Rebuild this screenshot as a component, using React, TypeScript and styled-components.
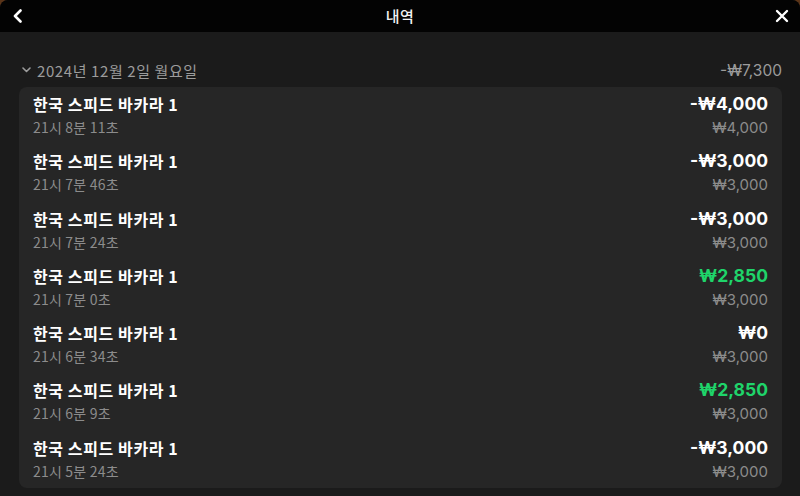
import React from "react";
import styled, { createGlobalStyle } from "styled-components";

const Global = createGlobalStyle`
  html, body { margin: 0; padding: 0; background: #5a3418; }
  body { font-family: "Noto Sans CJK KR", "Noto Sans", sans-serif; }
  #root { width: 800px; height: 496px; overflow: hidden; }
`;

const Modal = styled.div`
  width: 800px;
  height: 496px;
  background: #1b1b1b;
  border-radius: 8px 8px 0 0;
  overflow: hidden;
  display: flex;
  flex-direction: column;
`;

const TopBar = styled.header`
  height: 32px;
  flex: none;
  background: #030303;
  display: grid;
  grid-template-columns: 40px 1fr 40px;
  align-items: center;
`;

const IconBtn = styled.button<{ $side: "left" | "right" }>`
  background: none;
  border: 0;
  padding: 0;
  color: #ffffff;
  display: flex;
  align-items: center;
  justify-content: ${(p) => (p.$side === "left" ? "flex-start" : "flex-end")};
  padding-left: ${(p) => (p.$side === "left" ? "12px" : "0")};
  padding-right: ${(p) => (p.$side === "right" ? "11px" : "0")};
  height: 32px;
`;

const Title = styled.h1`
  margin: 0;
  text-align: center;
  color: #f2f2f2;
  font-size: 15px;
  font-weight: 500;
  line-height: 28px;
  letter-spacing: 0.5px;
`;

const Body = styled.div`
  flex: 1;
  padding: 26px 18px 0 19px;
  display: flex;
  flex-direction: column;
`;

const DateRow = styled.div`
  display: flex;
  align-items: center;
  justify-content: space-between;
  height: 24px;
  margin-bottom: 5px;
  color: #9c9c9c;
  font-size: 15px;
`;

const DateLabel = styled.div`
  display: flex;
  align-items: center;
  gap: 6px;
  padding-left: 3px;
  letter-spacing: 0.6px;
`;

const Total = styled.span`
  font-family: Inter, "Noto Sans", sans-serif;
  font-size: 15.5px;
  color: #9c9c9c;
`;

const Card = styled.div`
  background: #262626;
  border-radius: 8px;
  display: flex;
  flex-direction: column;
  flex: none;
`;

const Row = styled.div`
  height: 57.3px;
  box-sizing: border-box;
  padding: 7px 14px 0 14px;
  display: flex;
  justify-content: space-between;
`;

const Col = styled.div<{ $right?: boolean }>`
  display: flex;
  flex-direction: column;
  gap: 4px;
  align-items: ${(p) => (p.$right ? "flex-end" : "flex-start")};
`;

const GameName = styled.div`
  color: #ffffff;
  font-size: 16px;
  font-weight: 700;
  line-height: 20px;
  letter-spacing: 0.6px;
`;

const Time = styled.div`
  color: #8c8c8c;
  font-size: 14px;
  line-height: 19px;
  letter-spacing: 0.2px;
`;

const Amount = styled.div<{ $win?: boolean }>`
  font-family: Inter, "Noto Sans", sans-serif;
  color: ${(p) => (p.$win ? "#1fd46a" : "#ffffff")};
  font-size: 17.5px;
  font-weight: 700;
  line-height: 20px;
`;

const Stake = styled.div`
  font-family: Inter, "Noto Sans", sans-serif;
  color: #8c8c8c;
  font-size: 15px;
  line-height: 19px;
`;

const NextDate = styled.div`
  margin-top: 8px;
  padding-left: 46px;
  color: #bdbdbd;
  font-size: 14px;
  font-weight: 700;
`;

type Bet = { time: string; amount: string; stake: string; win?: boolean };

const bets: Bet[] = [
  { time: "21시 8분 11초", amount: "-₩4,000", stake: "₩4,000" },
  { time: "21시 7분 46초", amount: "-₩3,000", stake: "₩3,000" },
  { time: "21시 7분 24초", amount: "-₩3,000", stake: "₩3,000" },
  { time: "21시 7분 0초", amount: "₩2,850", stake: "₩3,000", win: true },
  { time: "21시 6분 34초", amount: "₩0", stake: "₩3,000" },
  { time: "21시 6분 9초", amount: "₩2,850", stake: "₩3,000", win: true },
  { time: "21시 5분 24초", amount: "-₩3,000", stake: "₩3,000" },
];

export default function App() {
  return (
    <>
      <Global />
      <Modal>
        <TopBar>
          <IconBtn $side="left" aria-label="back">
            <svg width="12" height="14" viewBox="0 0 12 14" fill="none">
              <path d="M8.5 1.5 L3 7 L8.5 12.5" stroke="#fff" strokeWidth="2.6" strokeLinecap="round" strokeLinejoin="round" />
            </svg>
          </IconBtn>
          <Title>내역</Title>
          <IconBtn $side="right" aria-label="close">
            <svg width="14" height="14" viewBox="0 0 14 14" fill="none">
              <path d="M2 2 L12 12 M12 2 L2 12" stroke="#fff" strokeWidth="2.4" strokeLinecap="round" />
            </svg>
          </IconBtn>
        </TopBar>
        <Body>
          <DateRow>
            <DateLabel>
              <svg width="9" height="6" viewBox="0 0 9 6" fill="none">
                <path d="M1 1 L4.5 4.5 L8 1" stroke="#9c9c9c" strokeWidth="1.6" strokeLinecap="round" strokeLinejoin="round" />
              </svg>
              <span>2024년 12월 2일 월요일</span>
            </DateLabel>
            <Total>-₩7,300</Total>
          </DateRow>
          <Card>
            {bets.map((b, i) => (
              <Row key={i}>
                <Col>
                  <GameName>한국 스피드 바카라 1</GameName>
                  <Time>{b.time}</Time>
                </Col>
                <Col $right>
                  <Amount $win={b.win}>{b.amount}</Amount>
                  <Stake>{b.stake}</Stake>
                </Col>
              </Row>
            ))}
          </Card>
          <NextDate>한국 스피드 바카라 1</NextDate>
        </Body>
      </Modal>
    </>
  );
}
